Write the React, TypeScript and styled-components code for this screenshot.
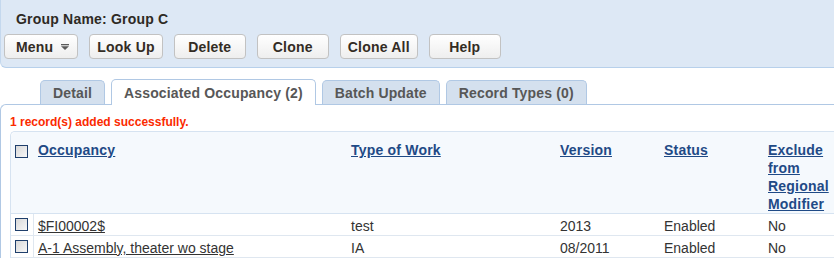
import * as React from 'react'
import styled, {createGlobalStyle} from 'styled-components'

const GlobalStyle = createGlobalStyle`
  html, body {
    margin: 0;
    padding: 0;
    background: #ffffff;
    overflow: hidden;
  }
  body {
    font-family: "Liberation Sans", Arial, sans-serif;
    font-size: 14px;
    color: #333333;
  }
`

const Page = styled.div`
  width: 834px;
  height: 261px;
  overflow: hidden;
`

const HeaderPanel = styled.div`
  background: #dde8f5;
  border-bottom: 1px solid #b7d0eb;
  border-left: 1px solid #c4d8ee;
  border-bottom-left-radius: 6px;
  padding: 11px 0 8px 3px;
  margin-right: -10px;
`

const Title = styled.div`
  font-weight: bold;
  font-size: 14px;
  line-height: 17px;
  letter-spacing: 0.2px;
  color: #2e2a24;
  padding-left: 12px;
`

const Toolbar = styled.div`
  display: flex;
  gap: 11px;
  margin-top: 6px;
`

const Button = styled.button<{$menu?: boolean}>`
  display: flex;
  align-items: center;
  justify-content: center;
  gap: 8px;
  box-sizing: border-box;
  height: 25px;
  min-width: 72px;
  padding: ${(p): string => (p.$menu ? '0 8px 0 11px' : '0 7px')};
  border: 1px solid #c2c2c2;
  border-radius: 4px;
  background: linear-gradient(#ffffff, #eeeeee);
  font-family: "Liberation Sans", Arial, sans-serif;
  font-weight: bold;
  font-size: 14px;
  letter-spacing: 0.2px;
  color: #332c24;
  cursor: pointer;
`

const MenuArrow = (): JSX.Element => (
  <svg width='8' height='6' viewBox='0 0 8 6'>
    <rect x='0' y='0' width='8' height='1.3' fill='#5a5a5a' />
    <polygon points='0,2.2 8,2.2 4,6' fill='#5a5a5a' />
  </svg>
)

const TabStrip = styled.div`
  display: flex;
  align-items: flex-end;
  gap: 6px;
  height: 25px;
  margin-top: 11px;
  padding-left: 40px;
`

const Tab = styled.div<{$active?: boolean}>`
  box-sizing: border-box;
  height: ${(p): string => (p.$active ? '26px' : '24px')};
  margin-bottom: ${(p): string => (p.$active ? '-1px' : '0')};
  position: relative;
  z-index: ${(p): string => (p.$active ? '1' : '0')};
  padding: ${(p): string => (p.$active ? '3px 12px 0' : '2px 12px 0')};
  border: 1px solid #b0c8e4;
  border-bottom: none;
  border-radius: 5px 5px 0 0;
  background: ${(p): string => (p.$active ? '#ffffff' : '#d4e0ee')};
  font-weight: bold;
  font-size: 14px;
  line-height: 20px;
  letter-spacing: 0.15px;
  color: #575757;
  white-space: nowrap;
`

const ContentPanel = styled.div`
  border-top: 1px solid #b0c8e4;
  border-left: 1px solid #b0c8e4;
  border-top-left-radius: 6px;
  padding-left: 9px;
`

const Message = styled.div`
  padding-top: 10px;
  font-weight: bold;
  font-size: 12px;
  line-height: 15px;
  color: #fb2a00;
`

const Grid = styled.table`
  margin-top: 1px;
  width: 827px;
  table-layout: fixed;
  border-collapse: separate;
  border-spacing: 0;
  border-top: 1px solid #d6e3f1;
  border-left: 1px solid #d6e3f1;
  border-top-left-radius: 5px;
`

const HeadCell = styled.th<{$check?: boolean}>`
  box-sizing: border-box;
  background: #f5f9fd;
  vertical-align: top;
  text-align: left;
  padding: ${(p): string => (p.$check ? '13px 0 0 4px' : '9px 4px 0')};
  border-bottom: 1px solid #d6e3f1;
  font-weight: bold;
  font-size: 14px;
  line-height: 18px;
  &:first-child {
    border-top-left-radius: 5px;
  }
`

const SortLink = styled.a`
  color: #1f4a86;
  text-decoration: underline;
  letter-spacing: 0.2px;
  cursor: pointer;
`

const Cell = styled.td<{$check?: boolean}>`
  box-sizing: border-box;
  padding: ${(p): string => (p.$check ? '0 0 0 4px' : '3px 4px 0')};
  border-bottom: 1px solid #dfe7f0;
  border-right: ${(p): string => (p.$check ? '1px solid #dfe7f0' : 'none')};
  vertical-align: middle;
  font-size: 14px;
  line-height: 18px;
  color: #333333;
  white-space: nowrap;
  overflow: hidden;
`

const RowLink = styled.a`
  color: #333333;
  text-decoration: underline;
  cursor: pointer;
`

const Check = styled.input.attrs({type: 'checkbox'})`
  appearance: none;
  -webkit-appearance: none;
  display: block;
  box-sizing: border-box;
  width: 13px;
  height: 13px;
  margin: 0;
  border: 1px solid #1f3f6c;
  background: linear-gradient(135deg, #d8d8d8, #f7f7f7);
`

interface Occupancy {
  name: string
  work: string
  version: string
  status: string
  exclude: string
}

const rows: Occupancy[] = [
  {name: '$FI00002$', work: 'test', version: '2013', status: 'Enabled', exclude: 'No'},
  {name: 'A-1 Assembly, theater wo stage', work: 'IA', version: '08/2011', status: 'Enabled', exclude: 'No'},
]

const tabs = ['Detail', 'Associated Occupancy (2)', 'Batch Update', 'Record Types (0)']
const actions = ['Look Up', 'Delete', 'Clone', 'Clone All', 'Help']

export default function App(): JSX.Element {
  return (
    <Page>
      <GlobalStyle />
      <HeaderPanel>
        <Title>Group Name: Group C</Title>
        <Toolbar>
          <Button $menu>
            Menu
            <MenuArrow />
          </Button>
          {actions.map((a) => (
            <Button key={a}>{a}</Button>
          ))}
        </Toolbar>
      </HeaderPanel>
      <TabStrip>
        {tabs.map((t, i) => (
          <Tab key={t} $active={i === 1}>{t}</Tab>
        ))}
      </TabStrip>
      <ContentPanel>
        <Message>1 record(s) added successfully.</Message>
        <Grid>
          <colgroup>
            <col style={{width: 23}} />
            <col style={{width: 313}} />
            <col style={{width: 209}} />
            <col style={{width: 104}} />
            <col style={{width: 104}} />
            <col style={{width: 74}} />
          </colgroup>
          <thead>
            <tr>
              <HeadCell $check><Check /></HeadCell>
              <HeadCell><SortLink>Occupancy</SortLink></HeadCell>
              <HeadCell><SortLink>Type of Work</SortLink></HeadCell>
              <HeadCell><SortLink>Version</SortLink></HeadCell>
              <HeadCell><SortLink>Status</SortLink></HeadCell>
              <HeadCell><SortLink>Exclude from Regional Modifier</SortLink></HeadCell>
            </tr>
          </thead>
          <tbody>
            {rows.map((r) => (
              <tr key={r.name}>
                <Cell $check><Check /></Cell>
                <Cell><RowLink>{r.name}</RowLink></Cell>
                <Cell>{r.work}</Cell>
                <Cell>{r.version}</Cell>
                <Cell>{r.status}</Cell>
                <Cell>{r.exclude}</Cell>
              </tr>
            ))}
          </tbody>
        </Grid>
      </ContentPanel>
    </Page>
  )
}
